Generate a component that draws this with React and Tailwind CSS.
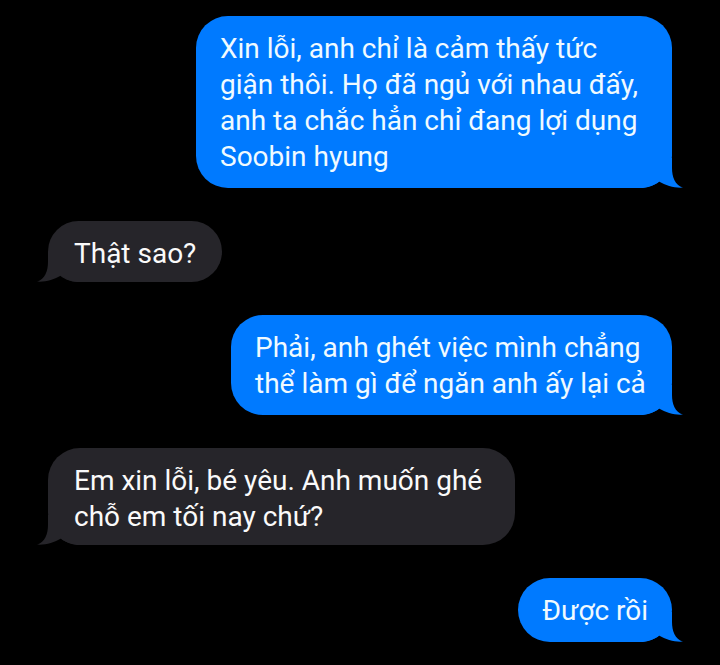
/**
 * Chat thread
 * Sent bubbles sit on the right, received ones on the left
 */
import clsx from 'clsx';

const MESSAGES = [
  {
    id: 1,
    sent: true,
    width: 'max-w-[476px]',
    text: 'Xin lỗi, anh chỉ là cảm thấy tức giận thôi. Họ đã ngủ với nhau đấy, anh ta chắc hẳn chỉ đang lợi dụng Soobin hyung',
  },
  { id: 2, sent: false, width: 'max-w-[467px]', text: 'Thật sao?' },
  {
    id: 3,
    sent: true,
    width: 'max-w-[441px]',
    text: 'Phải, anh ghét việc mình chẳng thể làm gì để ngăn anh ấy lại cả',
  },
  {
    id: 4,
    sent: false,
    width: 'max-w-[467px]',
    text: 'Em xin lỗi, bé yêu. Anh muốn ghé chỗ em tối nay chứ?',
  },
  { id: 5, sent: true, width: 'max-w-[476px]', text: 'Được rồi' },
];

function Tail({ sent }) {
  return (
    <svg
      viewBox="0 0 43 38"
      className={clsx(
        'absolute bottom-0 h-[38px] w-[43px]',
        sent ? '-right-[11px] fill-[#007aff]' : '-left-[11px] -scale-x-100 fill-[#26252a]'
      )}
      aria-hidden="true"
    >
      <path d="M32 8V18C32 27 35 35 43 37.6C35 38.4 26 35.5 19 31.5C14 35.5 8 38 0 38V8Z" />
    </svg>
  );
}

function Bubble({ sent, width, text }) {
  return (
    <li
      className={clsx(
        'relative rounded-[32px] pt-[15px] text-[28px] leading-9',
        width,
        sent
          ? 'self-end bg-[#007aff] px-6 pb-[13px] text-[#f0faff]'
          : 'self-start bg-[#26252a] px-[26px] pb-[10px] text-[#fafafa]'
      )}
    >
      <Tail sent={sent} />
      <p className="relative">{text}</p>
    </li>
  );
}

export default function App() {
  return (
    <main className="min-h-screen bg-black px-12 pt-4 pb-[23px] font-['Roboto','Liberation_Sans',sans-serif]">
      <ul className="flex flex-col gap-[33px]">
        {MESSAGES.map((message) => (
          <Bubble key={message.id} {...message} />
        ))}
      </ul>
    </main>
  );
}
